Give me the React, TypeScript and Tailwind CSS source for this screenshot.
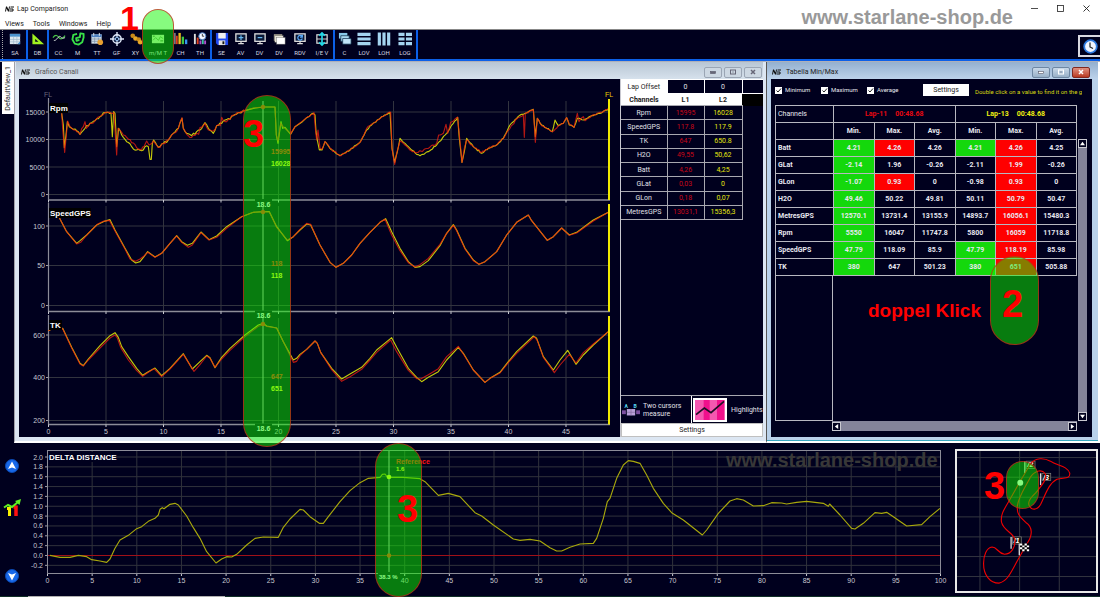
import React from "react";

type Pt = [number, number];

/* ---------- trace data (three units per chart pixel) ---------- */

const parse = (s: string, dx = 0, dy = 0): Pt[] =>
  s.trim().split(/\s+/).map((p) => {
    const [x, y] = p.split(",").map(Number);
    return [x + dx, y + dy] as Pt;
  });

const toPath = (pts: Pt[]) => "M" + pts.map((p) => p.map((v) => Math.round(v * 10) / 10).join(",")).join("L");

const noisy = (pts: Pt[], seed: number, amp: number): Pt[] => {
  let s = seed;
  const rnd = () => {
    s = (s * 9301 + 49297) % 233280;
    return s / 233280 - 0.5;
  };
  const out: Pt[] = [];
  pts.forEach((p, i) => {
    out.push(p);
    const n = pts[i + 1];
    if (!n) return;
    const steps = Math.floor((n[0] - p[0]) / 4);
    for (let k = 1; k < steps; k++) {
      const t = k / steps;
      out.push([p[0] + (n[0] - p[0]) * t, p[1] + (n[1] - p[1]) * t + rnd() * amp]);
    }
  });
  return out;
};

const rpm2 = [
  ...noisy(parse("185,85 190,120 193,188 198,150 202,110 208,125 220,133 230,137 240,148 255,130 270,115 285,107 300,95 315,83 333,84 337,155 341,80 345,85 350,185 356,130 365,150 380,170 395,185 410,195 425,197 435,185 445,185 450,223 454,223 457,175 461,165 475,187 490,175 505,165 520,145 535,130 546,100 550,130 560,145 575,152 590,140 600,135 615,113 625,130 640,145 650,122 665,115 675,105 690,103 700,92 715,83 735,77"), 7, 8),
  ...parse("760,70 790,66 825,66 829,150 834,175 843,110 848,130 855,127 872,148 885,125 905,112"),
  ...noisy(parse("20,98 40,85 45,90 48,140 52,165 58,195 66,195 75,170 90,190 120,212 150,195 180,172 200,135 215,120 245,95 270,82 276,190 284,232 292,200 300,160 315,175 330,190 350,208 360,212 385,200 410,180 440,145 460,115 473,97 478,160 486,232 493,200 500,160 520,185 545,205 565,190 590,180 610,160 630,120 650,100 665,88 685,80 700,73 706,155 712,100 725,120 740,130 757,140 765,105 775,122 790,115 800,98 808,120 822,127 832,100 850,105 875,92 900,85 925,72", 900), 11, 4),
];
const rpm1 = [
  ...noisy(parse("185,85 188,130 194,202 199,150 203,108 210,125 222,135 240,148 255,110 259,130 270,115 285,107 300,95 315,83 342,83 346,150 350,210 354,130 365,142 380,157 395,173 410,188 420,193 432,185 440,168 447,180 460,168 475,187 490,175 505,165 520,145 535,130 546,98 550,130 560,148 575,157 590,145 596,148 600,128 615,115 625,135 640,138 650,122 661,122 665,97 675,110 690,103 700,90 715,83 735,77"), 31, 9),
  ...parse("760,69 790,66 825,66 829,150 834,168 842,115 852,128 872,146 885,125 905,110"),
  ...noisy(parse("20,98 42,83 47,140 50,165 54,135 60,190 66,193 75,170 90,190 120,212 150,195 180,172 200,130 215,117 245,95 272,82 276,190 284,238 290,205 300,168 315,180 330,195 350,203 385,190 410,175 416,150 430,145 438,118 443,145 452,112 473,97 478,150 486,232 493,190 500,165 520,185 545,202 565,190 590,180 610,160 630,130 650,102 670,90 673,157 676,85 700,73 706,172 712,100 725,122 740,130 757,140 775,122 790,115 800,98 808,118 822,127 832,85 837,110 850,95 855,107 875,92 900,82 925,72", 900), 5, 6),
];

const speed2 = [
  ...parse("178,398 200,440 230,475 240,467 260,450 290,420 310,410 330,404 345,435 375,490 395,525 407,534 420,530 432,515 443,500 465,516 485,505 510,475 530,452 545,470 562,481 577,475 603,441 627,464 650,453 680,425 725,395 760,382 790,380 808,380 830,425 862,467 880,455"),
  ...parse("0,435 20,417 32,420 60,480 90,532 108,547 130,535 155,510 180,475 210,442 240,412 257,401 275,440 300,490 325,530 345,547 360,545 385,527 420,482 440,445 460,419 470,435 495,490 520,525 537,538 555,530 590,500 620,450 650,412 685,390 695,407 742,466 760,455 785,429 808,450 830,442 880,405 925,382", 900),
];
const speed1 = [
  ...parse("178,398 200,440 230,477 242,472 262,448 292,418 310,409 328,406 345,438 375,492 390,522 407,529 420,522 432,513 443,502 465,517 485,505 510,475 530,453 545,472 565,487 577,480 603,443 627,465 650,457 680,430 725,395 760,382 790,380 808,381 830,427 862,465 880,455"),
  ...parse("0,433 20,415 32,418 60,480 90,532 108,547 130,535 155,510 180,475 210,442 240,412 255,403 275,450 300,497 325,533 345,546 360,539 385,520 420,478 440,445 460,421 470,437 495,492 520,527 537,538 555,530 590,500 620,450 650,412 685,390 695,407 742,466 760,455 785,429 808,451 830,444 880,408 925,382", 900),
];

const tk2 = [
  ...parse("145,212 155,207 188,205 200,230 215,262 240,310 250,317 265,297 300,257 330,227 345,218 355,232 365,260 385,290 410,325 428,346 445,335 465,324 485,347 510,325 550,281 577,327 600,305 620,286 630,293 645,323 665,292 690,265 735,225 775,195 790,190 800,198 830,204 850,245 880,300 890,295"),
  ...parse("0,283 20,268 45,243 52,250 62,277 95,325 125,357 150,342 185,322 210,295 230,270 275,233 290,262 325,325 350,352 365,365 385,352 415,335 440,300 475,262 490,280 520,330 555,367 570,355 600,337 625,305 650,275 700,228 710,235 730,290 760,330 780,300 803,271 828,313 850,285 880,255 925,215", 900),
];
const tk1 = [
  ...parse("145,212 155,207 188,206 200,232 215,264 240,312 250,318 265,300 300,264 330,234 345,225 352,234 362,262 385,300 410,332 428,349 445,337 462,326 485,350 510,327 550,283 582,334 600,314 620,288 630,295 645,322 665,297 690,271 735,230 775,199 790,194 800,199 830,204 850,245 880,307 890,304"),
  ...parse("0,287 20,268 45,243 52,250 62,277 95,329 125,364 150,350 185,328 210,300 230,277 272,240 290,275 325,331 350,356 362,357 385,344 415,326 440,290 475,259 490,282 520,330 555,367 570,355 600,339 625,308 650,280 703,230 712,242 730,292 763,338 780,315 808,283 828,309 850,278 880,252 925,215", 900),
];

const delta = [
  ...parse("150,346 180,352 210,352 235,346 260,350 275,359 300,363 320,367 330,357 345,325 360,300 385,286 410,266 425,260 445,244 465,235 475,225 480,208 487,203 492,206 510,193 525,190 535,195 560,228 580,263 600,295 620,335 648,369 665,357 680,350 695,351 710,343 740,315 765,295 790,291 835,292 850,262 870,237 900,208 910,210 930,230 958,250"),
  ...parse("10,250 25,230 60,185 90,152 120,128 145,115 180,112 187,103 195,102 203,112 250,112 300,116 315,125 355,166 385,160 420,170 465,218 485,228 520,255 580,297 600,301 630,298 660,303 690,323 710,333 725,333 750,322 780,312 820,310 830,295 850,235 862,185 870,175 890,115 910,75 925,62", 960),
  ...parse("70,244 90,250 110,285 130,325 160,370 185,398 220,420 277,465 290,450 325,400 360,363 380,356 400,360 430,378 460,377 485,368 515,369 530,372 560,367 590,364 640,370 655,379 659,372 690,405 725,445 735,447 760,430 795,398 815,400 830,397 850,410 890,438 935,434 960,410 990,385", 1830, -180),
];

/* ---------- charts ---------- */

const axisText = "fill-[#c8c8d0] text-[7px]";

function Trace({ pts, dy, className }: { pts: Pt[]; dy: number; className: string }) {
  return (
    <path d={toPath(pts)} transform={`translate(0 ${dy}) scale(0.33333)`} fill="none" strokeWidth={3.4} strokeLinejoin="round" className={className} />
  );
}

interface Panel {
  name: string;
  labelW: number;
  top: number;
  base: number;
  ticks: [string, number][];
  dy: number;
  a: Pt[];
  b: Pt[];
  va: string;
  vb: string;
  vy: number;
  dot: number;
}

const panels: Panel[] = [
  { name: "Rpm", labelW: 19, top: 101, base: 200, ticks: [["15000", 112], ["10000", 139.5], ["5000", 167], ["0", 194.5]], dy: 85, a: rpm1, b: rpm2, va: "15995", vb: "16028", vy: 154, dot: 107 },
  { name: "SpeedGPS", labelW: 42, top: 206, base: 311.5, ticks: [["100", 226], ["50", 265.5], ["0", 305.5]], dy: 85, a: speed1, b: speed2, va: "118", vb: "118", vy: 266, dot: 212 },
  { name: "TK", labelW: 13, top: 318, base: 424.5, ticks: [["600", 335], ["400", 377.5], ["200", 420.5]], dy: 260, a: tk1, b: tk2, va: "647", vb: "651", vy: 379, dot: 324 },
];

function ChannelChart() {
  const xs = Array.from({ length: 10 }, (_, i) => 48.5 + i * 57.5);
  return (
    <svg viewBox="19 79 601 358" className="block w-full bg-[#00001e] font-['Liberation_Sans',sans-serif]" role="img" aria-label="Grafico Canali">
      <text x="44" y="97" className="fill-[#66667a] text-[7px]">FL</text>
      <text x="605" y="97" className="fill-[#e8c800] text-[7px]">FL</text>
      {panels.map((p) => (
        <g key={p.name}>
          {xs.slice(1).map((x) => (
            <path key={x} d={`M${x} ${p.top}V${p.base}`} stroke="#32343f" />
          ))}
          {p.ticks.map(([t, y]) => (
            <g key={t}>
              <path d={`M49 ${y}H609`} stroke="#32343f" />
              <path d={`M46 ${y}h3`} stroke="#a0a0a8" />
              <text x="45" y={y + 2.5} textAnchor="end" className={axisText}>{t}</text>
            </g>
          ))}
          <path d={`M48.5 ${p.top - 3}V${p.base}`} stroke="#8c8c98" strokeWidth="1.2" />
          <path d={`M48 ${p.base}H610`} stroke="#8c8c98" strokeWidth="1.4" />
          {xs.map((x) => (
            <path key={x} d={`M${x} ${p.base}v2.5`} stroke="#c8c8d0" />
          ))}
          <Trace pts={p.b} dy={p.dy} className="stroke-[#c4c80a]" />
          <Trace pts={p.a} dy={p.dy} className="stroke-[#f02010]/75" />
          <path d={`M263 ${p.top}V${p.base}`} stroke="#b8b8b8" />
          <circle cx="263" cy={p.dot} r="2.2" fill="#ff2010" />
          <rect x="255" y={p.base - 1} width="17" height="9" fill="#00001e" />
          <text x="263.5" y={p.base + 6.5} textAnchor="middle" className="fill-white text-[7px] font-bold">18.6</text>
          <text x="271" y={p.vy} className="fill-[#ff2010] text-[7px] font-bold">{p.va}</text>
          <text x="271" y={p.vy + 11.5} className="fill-[#ffff20] text-[7px] font-bold">{p.vb}</text>
          <rect x="49" y={p.top + 2} width={p.labelW} height="10" fill="#000" />
          <text x="50" y={p.top + 10} className="fill-white text-[8px] font-bold">{p.name}</text>
          <path d={`M609 ${p.top - 2}V${p.base}`} stroke="#f0e800" strokeWidth="2" />
        </g>
      ))}
      {xs.map((x, i) => (
        <text key={x} x={x} y="434" textAnchor="middle" className={axisText}>{i * 5}</text>
      ))}
    </svg>
  );
}

function DeltaChart() {
  const xs = Array.from({ length: 21 }, (_, i) => 47.5 + i * 44.65);
  const ys = Array.from({ length: 12 }, (_, i) => 457 + i * 9.85);
  return (
    <svg viewBox="24 443 926 152" className="block w-full font-['Liberation_Sans',sans-serif]" role="img" aria-label="Delta distance">
      {xs.map((x, i) => (
        <g key={x}>
          <path d={`M${x} 451V573`} stroke="#30323c" />
          <path d={`M${x} 573v3`} stroke="#c8c8d0" />
          <text x={x} y="582.5" textAnchor="middle" className={axisText}>{i * 5}</text>
        </g>
      ))}
      {ys.map((y, i) => (
        <g key={y}>
          <path d={`M48 ${y}H940`} stroke="#30323c" />
          <path d={`M45 ${y}h3`} stroke="#a0a0a8" />
          <text x="43" y={y + 2.5} textAnchor="end" className={axisText}>{(2 - i * 0.2).toFixed(1).replace("-0.0", "0.0")}</text>
        </g>
      ))}
      <rect x="47.5" y="450.5" width="893" height="123" fill="none" stroke="#8c8c98" />
      <path d="M48 555.5H940" stroke="#a01018" />
      <Trace pts={delta} dy={440} className="stroke-[#a8a80c]" />
      <rect x="49" y="452" width="64" height="10" fill="#00001e" />
      <text x="49" y="460" className="fill-white text-[8px] font-bold">DELTA DISTANCE</text>
      <path d="M389 451V573" stroke="#b8b8b8" />
      <circle cx="389" cy="477" r="2.3" fill="#ffff20" />
      <circle cx="389" cy="555.5" r="2.2" fill="#ff2010" />
      <text x="396" y="464" className="fill-[#ff1010] text-[7px] font-bold">Reference</text>
      <text x="396" y="471" className="fill-[#ffff20] text-[6px] font-bold">1.6</text>
      <rect x="378" y="572" width="22" height="8" fill="#00001e" />
      <text x="379" y="579" className="fill-white text-[6px] font-bold">38.3 %</text>
      <text x="726" y="467" className="fill-[#383838] text-[20px] font-bold">www.starlane-shop.de</text>
    </svg>
  );
}

function Flag({ x, y, n }: { x: number; y: number; n: string }) {
  return (
    <g>
      <path d={`M${x} ${y}v36`} stroke="#ddd" strokeWidth="4" />
      <rect x={x + 4} y={y} width="27" height="22" fill="#111" stroke="#888" strokeWidth="2" />
      <text x={x + 7} y={y + 19} className="fill-white text-[22px] font-bold italic">{n}</text>
    </g>
  );
}

function TrackMap() {
  return (
    <svg viewBox="1040 212 424 426" className="block w-full border-2 border-[#e8e8e8] font-['Liberation_Sans',sans-serif]" role="img" aria-label="Track map">
      {[1110, 1231, 1352].map((x) => <path key={x} d={`M${x} 212V638`} stroke="#343640" strokeWidth="3" />)}
      {[232, 292, 353, 413, 474, 534, 595].map((y) => <path key={y} d={`M1040 ${y}H1464`} stroke="#343640" strokeWidth="3" />)}
      <Flag x={1247} y={243} n="/2" />
      <Flag x={1295} y={280} n="/3" />
      <Flag x={1205} y={474} n="/1" />
      <path d="M1230 309L1200 362C1180 395 1172 410 1176 430C1182 455 1210 460 1216 480C1220 505 1205 527 1185 527C1165 525 1163 505 1147 505C1130 507 1121 530 1121 555C1121 590 1140 615 1168 615C1195 610 1205 580 1228 540L1262 480C1272 455 1265 440 1250 430C1235 415 1222 408 1224 380C1228 350 1250 320 1265 290C1280 270 1300 268 1308 280C1318 295 1300 315 1280 340C1265 355 1255 365 1260 378C1268 395 1285 392 1295 375C1310 345 1320 310 1345 298C1365 292 1385 300 1384 280C1375 255 1345 258 1325 243C1305 232 1280 232 1265 250Z" fill="none" stroke="#f00000" strokeWidth="3.4" />
      <path d="M1230 494v36" stroke="#ddd" strokeWidth="4" />
      <rect x="1232" y="494" width="28" height="24" fill="#000" />
      <path d="M1232 494h7v6h-7zM1246 494h7v6h-7zM1239 500h7v6h-7zM1253 500h7v6h-7zM1232 506h7v6h-7zM1246 506h7v6h-7zM1239 512h7v6h-7zM1253 512h7v6h-7z" fill="#fff" />
      <circle cx="1233" cy="309" r="9" fill="#fff" />
    </svg>
  );
}

/* ---------- icons ---------- */

function Logo() {
  return (
    <svg viewBox="0 0 18 12" className="h-[6px] w-[9px]" aria-hidden="true">
      <path d="M0 11L2 1H4L7 7L8 1H10L8 11H6L3 5L2 11Z" fill="#111" />
      <path d="M11 2H18M10 6H16M9 10H16M16 6V10" stroke="#111" strokeWidth="2" fill="none" />
    </svg>
  );
}

const monitor = (inner: React.ReactNode) => (
  <>
    <rect x="2" y="2" width="11" height="8" fill="#0a1838" stroke="#ddd" strokeWidth="1.4" />
    <path d="M7.5 10v2M4.500 12.500h6" stroke="#ddd" strokeWidth="1.300" />
    {inner}
  </>
);

const icons: Record<string, React.ReactNode> = {
  sa: <><rect x="2" y="2" width="11" height="11" fill="#dce8f0" /><rect x="2" y="2" width="11" height="3" fill="#4c94d0" /><path d="M2 8h11M2 10.500h11M6 5v8M9.500 5v8" stroke="#9cb8cc" strokeWidth=".7" /><path d="M10 13l3-3v3z" fill="#3c88c8" /></>,
  db: <path d="M1.500 1.500V13H14ZM4.500 7.500L8 10.500H4.500Z" fill="#a0f020" fillRule="evenodd" />,
  cc: <><path d="M1 6C4 2 6 4 7.500 6S11 8 14 4" stroke="#48c848" fill="none" strokeWidth="1.300" /><path d="M2 9C5 10 7 3 9 5S12 7 14 6" stroke="#d8e0e0" fill="none" /></>,
  m: <path d="M6.500 2L2.500 3L1.500 8L4 12.500L8 13.500L12 11L13.500 6V2L10 1.500L9.500 5.500L5.500 6.500L6 9.500L9 8.500" stroke="#38e048" fill="none" strokeWidth="2" strokeLinejoin="round" />,
  tt: <><rect x="1.500" y="2.500" width="11" height="10" fill="#d0dce8" /><path d="M1.500 4h11" stroke="#5080c0" strokeWidth="3" /><path d="M2 7.500h10M2 10h10M5 6v6M9 6v6" stroke="#7888a0" strokeWidth=".7" /><path d="M4 1v3M10 1v3" stroke="#eee" /><circle cx="11" cy="11" r="3" fill="#e8a030" /></>,
  gf: <><circle cx="7.500" cy="7.500" r="4.500" fill="#16264a" stroke="#e0e8f8" strokeWidth="1.500" /><path d="M7.500 0V5M7.500 10V15M0 7.500H5M10 7.500H15" stroke="#e0e8f8" strokeWidth="1.500" /><circle cx="7.500" cy="7.500" r="1.800" fill="none" stroke="#9cc8f8" /></>,
  xy: <><circle cx="4" cy="4" r="2.500" fill="#c88818" /><circle cx="7" cy="7" r="2.500" fill="#e8a828" /><circle cx="10.500" cy="8" r="2.500" fill="#c88818" /><circle cx="12" cy="11" r="2.500" fill="#e8a828" /></>,
  mm: <><rect x="1" y="3" width="13" height="9" fill="#d8e8c8" /><path d="M2 9L5 6L8 9L10 5L13 7" stroke="#70a860" fill="none" /><path d="M10 9.500h3M2 4.500h2" stroke="#406830" /></>,
  ch: <><path d="M1 13V1" stroke="#ddd" /><path d="M3 13V4" stroke="#e04020" strokeWidth="2" /><path d="M6 13V1" stroke="#f0c020" strokeWidth="2.500" /><path d="M9.500 13V5" stroke="#40c840" strokeWidth="2.500" /><path d="M13 13V8" stroke="#3898f0" strokeWidth="2.500" /></>,
  th: <><path d="M2 13V2" stroke="#ddd" strokeWidth="2" /><path d="M5 13V6" stroke="#e04020" strokeWidth="2" /><path d="M8 13V9M13 13V9" stroke="#b050d0" strokeWidth="2" /><path d="M10.500 13V8" stroke="#40c8a0" strokeWidth="2" /><circle cx="10" cy="4.500" r="3.800" fill="#f4f8ff" stroke="#4878c0" /><path d="M10 2v2.500h2" stroke="#333" fill="none" /></>,
  se: <><path d="M1 1H14V14H3L1 12Z" fill="#2048f0" /><rect x="3.500" y="1" width="8" height="6" fill="#f0f0f0" /><rect x="4" y="9" width="7" height="5" fill="#e0e0e0" /><rect x="8" y="10" width="2" height="3" fill="#111" /></>,
  av: monitor(<path d="M7.500 3.500v5M5 6h5" stroke="#68b8f0" strokeWidth="1.300" />),
  dv: monitor(<path d="M5 6h5" stroke="#68b8f0" strokeWidth="1.300" />),
  dv2: <><rect x="2" y="2.500" width="9" height="7" fill="#c8c0a8" /><rect x="3" y="4" width="9" height="7" fill="#e8e4d8" stroke="#555" strokeWidth=".5" /><rect x="5" y="6" width="9" height="7" fill="#fff" stroke="#777" strokeWidth=".5" /></>,
  rdv: monitor(<path d="M9.500 4.500A2.500 2.500 0 1 0 10 7M10 3v2.500H7.500" stroke="#58a8f8" strokeWidth="1.300" fill="none" />),
  iev: <><rect x="2" y="3" width="11" height="9" fill="none" stroke="#ddd" strokeWidth="1.300" /><path d="M2 7.500h11" stroke="#ddd" /><path d="M7.500 1v13M4.500 4L7.500 1L10.500 4M4.500 11L7.500 14L10.500 11" stroke="#20d8e8" strokeWidth="1.800" fill="none" /></>,
  c: <><path d="M1 1h9v6H1z" fill="#88c8e8" /><path d="M3 4h9v6H3z" fill="#a8d8f0" stroke="#10304c" strokeWidth=".8" /><path d="M5 7h9v6H5z" fill="#c0e4f8" stroke="#10304c" strokeWidth=".8" /></>,
  lov: <path d="M.5 2.500h14M.5 7.500h14M.5 12.500h14" stroke="#a4d4f0" strokeWidth="3.400" />,
  loh: <path d="M2.500 .5v14M7.500 .5v14M12.500 .5v14" stroke="#a4d4f0" strokeWidth="3.400" />,
  log: <path d="M.5 2.500h6.500M8.500 2.500h6.500M.5 7.500h6.500M8.500 7.500h6.500M.5 12.500h6.500M8.500 12.500h6.500" stroke="#a4d4f0" strokeWidth="3.400" />,
};

const tools: { icon: string; label: string; w: string; sep?: boolean }[] = [
  { icon: "sa", label: "SA", w: "w-[22px]", sep: true },
  { icon: "db", label: "DB", w: "w-[19px]", sep: true },
  { icon: "cc", label: "CC", w: "w-[19px]" },
  { icon: "m", label: "M", w: "w-[19px]" },
  { icon: "tt", label: "TT", w: "w-5" },
  { icon: "gf", label: "GF", w: "w-[19px]" },
  { icon: "xy", label: "XY", w: "w-[19px]" },
  { icon: "mm", label: "m/M T", w: "w-[26px]" },
  { icon: "ch", label: "CH", w: "w-[19px]" },
  { icon: "th", label: "TH", w: "w-5", sep: true },
  { icon: "se", label: "SE", w: "w-[19px]" },
  { icon: "av", label: "AV", w: "w-[19px]" },
  { icon: "dv", label: "DV", w: "w-[19px]" },
  { icon: "dv2", label: "DV", w: "w-5" },
  { icon: "rdv", label: "RDV", w: "w-[22px]" },
  { icon: "iev", label: "I/E V", w: "w-[22px]", sep: true },
  { icon: "c", label: "C", w: "w-[19px]" },
  { icon: "lov", label: "LOV", w: "w-5" },
  { icon: "loh", label: "LOH", w: "w-5" },
  { icon: "log", label: "LOG", w: "w-[22px]", sep: true },
];

function WindowTitle({ title, active }: { title: string; active?: boolean }) {
  const btn = active
    ? "grid h-[11px] w-[18px] place-items-center rounded-[2px] border border-[#6e87a3] bg-linear-to-b from-[#c8d8e8] to-[#98b0c8]"
    : "grid h-[11px] w-[18px] place-items-center rounded-[2px] border border-[#9aa5b4] bg-[#ccd7e2]";
  const close = active
    ? "grid h-[11px] w-[18px] place-items-center rounded-[2px] border border-[#802820] bg-linear-to-b from-[#e09080] to-[#b83820]"
    : btn;
  const ink = active ? "#fff" : "#667";
  return (
    <div className={active ? "flex h-[17px] items-center gap-[5px] bg-linear-to-b from-[#94b0cf] to-[#bcd2ea] pt-[3px] pr-2 pl-[5px]" : "flex h-[17px] items-center gap-[5px] bg-linear-to-b from-[#b8c6d4] to-[#d6e1ec] pt-[3px] pr-px pl-[5px]"}>
      <Logo />
      <h2 className={active ? "text-[7px] leading-[10px] text-[#222]" : "text-[7px] leading-[10px] text-[#555]"}>{title}</h2>
      <div className="ml-auto flex gap-[2px]">
        <button aria-label="Minimize" className={btn}><svg viewBox="0 0 10 6" className="w-[10px]"><rect x="2.500" y="2.500" width="5" height="2" fill={ink} stroke="#556" strokeWidth=".6" /></svg></button>
        <button aria-label="Maximize" className={btn}><svg viewBox="0 0 10 6" className="w-[10px]"><rect x="2.500" y="1" width="5" height="4" fill="none" stroke={ink} /><rect x="4.500" y="2.500" width="1" height="1" fill="#556" /></svg></button>
        <button aria-label="Close" className={close}><svg viewBox="0 0 10 6" className="w-[10px]"><path d="M3 1L7 5M7 1L3 5" stroke={ink} strokeWidth="1.500" /></svg></button>
      </div>
    </div>
  );
}

/* ---------- tables ---------- */

const lapRows = [
  ["Rpm", "15995", "16028"], ["SpeedGPS", "117.8", "117.9"], ["TK", "647", "650.8"], ["H2O", "49,55", "50,62"],
  ["Batt", "4,26", "4,25"], ["GLat", "0,03", "0"], ["GLon", "0,18", "0,07"], ["MetresGPS", "13031,1", "15356,3"],
];

function LapPanel() {
  return (
    <aside className="flex flex-col border-l border-[#c8c8d0] text-[7px] leading-[10px] text-[#e0e0e8]">
      <table className="h-[141px] w-full table-fixed border-collapse text-center">
        <colgroup><col className="w-[46px]" /><col className="w-[37px]" /><col className="w-[38px]" /><col /></colgroup>
        <thead>
          <tr className="h-[14px]">
            <th className="border border-l-0 border-white bg-white font-normal text-[#222]">Lap Offset</th>
            <td className="border border-white">0</td>
            <td className="border border-white">0</td>
            <td className="border border-r-0 border-white" />
          </tr>
          <tr className="h-[12px] bg-white font-bold text-[#222]">
            <th>Channels</th><th>L1</th><th>L2</th><td className="bg-black" />
          </tr>
        </thead>
        <tbody>
          {lapRows.map(([n, a, b]) => (
            <tr key={n}>
              <th className="border border-l-0 border-[#a8a8b0] font-normal">{n}</th>
              <td className="border border-[#a8a8b0] text-[#c80818]">{a}</td>
              <td className="border border-[#a8a8b0] text-[#e4e410]">{b}</td>
              <td />
            </tr>
          ))}
        </tbody>
      </table>
      <div className="mt-auto grid grid-cols-2 border-t border-[#a8a8b0]">
        <button className="flex h-[27px] items-center gap-[3px] border-r border-white pl-px text-left leading-[8px]">
          <svg viewBox="0 0 56 42" className="h-[14px] w-[18px] shrink-0" aria-hidden="true">
            <text x="8" y="16" className="fill-[#58d8f0] text-[16px] font-bold">A</text>
            <text x="36" y="16" className="fill-[#58d8f0] text-[16px] font-bold">B</text>
            <rect x="0" y="22" width="12" height="12" fill="#7c50a0" /><rect x="15" y="18" width="26" height="20" fill="#b8a0d8" /><rect x="44" y="22" width="12" height="12" fill="#7c50a0" />
            <path d="M28 18v20M15 28h26" stroke="#806898" strokeWidth="2" />
          </svg>
          <span>Two cursors<br />measure</span>
        </button>
        <button className="flex items-center gap-1 pl-px">
          <svg viewBox="0 0 102 72" className="h-[24px] w-[34px] shrink-0" aria-hidden="true">
            <rect width="102" height="72" fill="#fff" /><rect x="7" y="6" width="88" height="60" fill="#f0108c" />
            <path d="M7 6h25v60H7zM50 6h22v60H50z" fill="#f458b0" />
            <path d="M9 50L34 30L54 44L93 10" stroke="#1c1024" strokeWidth="5" fill="none" />
          </svg>
          Highlights
        </button>
      </div>
      <button className="h-[14px] border border-[#c0c0c0] bg-white text-[#222]">Settings</button>
    </aside>
  );
}

const G = "bg-[#14d80c]";
const R = "bg-[#ff0000]";
const N = "";
const minMax: [string, [string, string][]][] = [
  ["Batt", [["4.21", G], ["4.26", R], ["4.26", N], ["4.21", G], ["4.26", R], ["4.25", N]]],
  ["GLat", [["-2.14", G], ["1.96", N], ["-0.26", N], ["-2.11", N], ["1.99", R], ["-0.26", N]]],
  ["GLon", [["-1.07", G], ["0.93", R], ["0", N], ["-0.98", N], ["0.93", R], ["0", N]]],
  ["H2O", [["49.46", G], ["50.22", N], ["49.81", N], ["50.11", N], ["50.79", R], ["50.47", N]]],
  ["MetresGPS", [["12570.1", G], ["13731.4", N], ["13155.9", N], ["14893.7", N], ["16056.1", R], ["15480.3", N]]],
  ["Rpm", [["5550", G], ["16047", N], ["11747.8", N], ["5800", N], ["16059", R], ["11718.8", N]]],
  ["SpeedGPS", [["47.79", G], ["118.09", N], ["85.9", N], ["47.79", G], ["118.19", R], ["85.98", N]]],
  ["TK", [["380", G], ["647", N], ["501.23", N], ["380", G], ["651", R], ["505.88", N]]],
];

function Check({ label }: { label: string }) {
  return (
    <label className="flex items-center gap-[3px] text-[6px]">
      <span className="grid">
        <input type="checkbox" defaultChecked className="col-start-1 row-start-1 size-[7px] appearance-none bg-white" />
        <svg viewBox="0 0 7 7" className="pointer-events-none col-start-1 row-start-1 size-[7px]"><path d="M1.500 3.500L3 5L6 1.500" stroke="#222" fill="none" /></svg>
      </span>
      {label}
    </label>
  );
}

function Arrow({ d, label }: { d: string; label: string }) {
  return (
    <button aria-label={label} className="grid size-[9px] shrink-0 place-items-center border border-[#c8c8d0] bg-[#00001e]">
      <svg viewBox="0 0 6 6" className="size-[5px]"><path d={d} fill="#fff" /></svg>
    </button>
  );
}

function MinMaxPanel() {
  const line = "border border-[#b8b8c0]";
  return (
    <div className="flex flex-1 flex-col bg-[#00001e] pr-[5px] pb-[6px] pl-1 text-[7px] leading-[10px] text-[#e8e8f0]">
      <div className="flex h-[26px] items-center">
        <div className="grid w-[148px] shrink-0 grid-cols-[46px_46px_1fr] pb-[4px]">
          <Check label="Minimum" /><Check label="Maximum" /><Check label="Average" />
        </div>
        <button className="mb-[4px] h-[12px] w-[46px] shrink-0 bg-white text-[#222]">Settings</button>
        <p className="ml-[6px] overflow-hidden text-[6px] whitespace-nowrap text-[#d8d810]">Double click on a value to find it on the g</p>
      </div>
      <div className="grid flex-1 grid-cols-[minmax(0,1fr)_10px] grid-rows-[1fr_10px]">
        <div className="grid grid-cols-[58px_minmax(0,1fr)] grid-rows-[auto_1fr]">
          <table className="col-span-2 w-full table-fixed border-collapse text-center font-bold">
            <colgroup><col className="w-[58px]" /></colgroup>
            <thead>
              <tr className="h-[17px]">
                <th className={`${line} px-[2px] text-left font-normal`}>Channels</th>
                <th colSpan={3} className={`${line} text-[#e80810]`}><span className="mr-2">Lap-11</span>00:48.68</th>
                <th colSpan={3} className={`${line} text-[#f0f010]`}><span className="mr-2">Lap-13</span>00:48.68</th>
              </tr>
              <tr className="h-[17px] border-b border-white">
                <th className={line} />
                {["Min.", "Max.", "Avg.", "Min.", "Max.", "Avg."].map((h, i) => <th key={i} className={line}>{h}</th>)}
              </tr>
            </thead>
            <tbody>
              {minMax.map(([n, cells]) => (
                <tr key={n} className="h-[17px]">
                  <th className={`${line} px-[2px] text-left`}>{n}</th>
                  {cells.map(([v, c], i) => <td key={i} className={`${line} ${c}`}>{v}</td>)}
                </tr>
              ))}
            </tbody>
          </table>
          <div className="border border-t-0 border-[#b8b8c0]" />
          <div />
        </div>
        <div className="mt-[34px] ml-px flex flex-col justify-between bg-[#84849a]">
          <Arrow label="Scroll up" d="M3 1L6 5H0Z" /><Arrow label="Scroll down" d="M3 5L6 1H0Z" />
        </div>
        <div className="ml-[57px] flex items-center justify-between bg-[#84849a]">
          <Arrow label="Scroll left" d="M1 3L5 0V6Z" /><Arrow label="Scroll right" d="M5 3L1 0V6Z" />
        </div>
      </div>
    </div>
  );
}

/* ---------- annotations ---------- */

function Mark({ box }: { box: string }) {
  return <div className={`pointer-events-none absolute rounded-full border border-[#d01818]/70 bg-[#10f800]/50 ${box}`} />;
}

function Num({ n, pos }: { n: string; pos: string }) {
  return <span className={`pointer-events-none absolute font-['Liberation_Sans',sans-serif] font-bold text-[#ff0000] ${pos}`}>{n}</span>;
}

function Round({ d, label }: { d: string; label: string }) {
  return (
    <button aria-label={label}>
      <svg viewBox="0 0 14 14" className="size-[14px]"><circle cx="7" cy="7" r="6.500" fill="#1868e8" stroke="#0c48b0" /><path d={d} fill="#fff" /></svg>
    </button>
  );
}

export default function App() {
  return (
    <div className="relative flex min-h-screen w-full flex-col overflow-hidden bg-[#00001e] font-['Roboto','Noto_Sans',sans-serif]">
      <header className="flex h-[29px] justify-between bg-white text-[7px] leading-[10px] text-[#222]">
        <div>
          <h1 className="flex h-[18px] items-center gap-[3px] pl-[5px]"><Logo />Lap Comparison</h1>
          <nav className="flex h-[11px] items-center gap-[9px] pl-[5px]">
            <button>Views</button><button>Tools</button><button>Windows</button><button>Help</button>
          </nav>
        </div>
        <div className="flex items-start">
          <span className="mr-[18px] pt-[5px] font-['Liberation_Sans',sans-serif] text-[20px] leading-[24px] font-bold text-[#999]">www.starlane-shop.de</span>
          <div className="flex gap-[19px] pt-[5px] pr-[10px]">
            <button aria-label="Minimize"><svg viewBox="0 0 7 7" className="size-[7px]"><path d="M0 3.500h7" stroke="#222" strokeWidth=".8" /></svg></button>
            <button aria-label="Maximize"><svg viewBox="0 0 7 7" className="size-[7px]"><rect x=".5" y=".5" width="6" height="6" fill="none" stroke="#222" strokeWidth=".8" /></svg></button>
            <button aria-label="Close"><svg viewBox="0 0 7 7" className="size-[7px]"><path d="M.5 .5L6.500 6.500M6.500 .5L.5 6.500" stroke="#222" strokeWidth=".9" /></svg></button>
          </div>
        </div>
      </header>

      <div className="flex h-[32px] border-t border-b-2 border-t-[#888] border-b-[#0c60e8]" role="toolbar">
        <div className="ml-[2px] w-[2px] border-l border-dotted border-[#aaa]" />
        {tools.map((t, i) => (
          <React.Fragment key={i}>
            <button className={`flex flex-col items-center gap-[3px] pt-[2px] text-[6px] leading-[8px] whitespace-nowrap text-[#d4d8e0] ${t.w}`}>
              <svg viewBox="0 0 15 15" className="size-[14px]" aria-hidden="true">{icons[t.icon]}</svg>
              {t.label}
            </button>
            {t.sep && <div className="w-[2px] bg-[#0c60e8]" />}
          </React.Fragment>
        ))}
        <button aria-label="Lap times" className="mt-[5px] ml-auto grid h-[22px] w-[22px] place-items-center border-2 border-r-0 border-[#d8d8e0]">
          <svg viewBox="0 0 15 15" className="size-[15px]"><circle cx="7.500" cy="7.500" r="6.300" fill="#f0f4ff" stroke="#2c78e0" strokeWidth="1.800" /><path d="M7 3.500V8L10 9.500" stroke="#222" fill="none" strokeWidth="1.200" /></svg>
        </button>
      </div>

      <main className="grid grid-cols-[14px_minmax(0,752fr)_minmax(0,334fr)] border-t border-[#b0b0b8]">
        <div className="pl-[2px]">
          <button className="grid h-[52px] w-full place-items-center bg-white text-[7px] leading-[10px] text-[#222]">
            <span className="rotate-180 [writing-mode:vertical-rl]">DefaultView_1</span>
          </button>
        </div>
        <section className="border-b-2 border-l border-b-white border-l-[#a0a0a8] bg-[#dce6f2] pr-[3px] pb-[4px] pl-[4px]">
          <div className="-ml-[3px]"><WindowTitle title="Grafico Canali" /></div>
          <div className="grid grid-cols-[minmax(0,601fr)_minmax(0,143fr)] bg-[#00001e]"><ChannelChart /><LapPanel /></div>
        </section>
        <section className="flex flex-col border-r-2 border-b-2 border-l border-r-white border-b-white border-l-[#555] bg-[#b9d1ea]">
          <WindowTitle title="Tabella Min/Max" active />
          <div className="flex flex-1 flex-col border-b border-[#38a8c0] pr-[6px] pb-[3px] pl-[4px]"><MinMaxPanel /></div>
        </section>
      </main>

      <section className="grid flex-1 grid-cols-[24px_minmax(0,1fr)_150px]">
        <div className="flex flex-col items-center pt-[16px] pb-[13px]">
          <Round label="Previous" d="M7 2.500L11 10L7 8.500L3 10Z" />
          <svg viewBox="0 0 18 18" className="mt-[26px] mb-auto size-[18px]" aria-hidden="true">
            <path d="M6.500 17V8M4 9.500h3" stroke="#f8f000" strokeWidth="3" /><path d="M13 17V6.500M10.500 8h3" stroke="#ff1010" strokeWidth="3.500" />
            <path d="M1 8.500L5 6L9 8L15 3" stroke="#60f020" strokeWidth="2" fill="none" /><path d="M12 2L18 0L16.500 6Z" fill="#60f020" />
          </svg>
          <Round label="Next" d="M7 11.500L11 4L7 5.500L3 4Z" />
        </div>
        <DeltaChart />
        <div className="pt-[6px] pr-[2px] pl-[5px]"><TrackMap /></div>
      </section>
      <div className="h-px bg-[#123028] pl-[28px]"><div className="h-px w-[197px] bg-[#b0b0b0]" /></div>

      <Mark box="top-[9px] left-[142px] h-[55px] w-[32px]" />
      <Mark box="top-[95px] left-[243px] h-[352px] w-[48px]" />
      <Mark box="top-[256px] left-[990px] h-[89px] w-[49px]" />
      <Mark box="top-[443px] left-[375px] h-[154px] w-[47px]" />
      <Mark box="top-[461px] left-[1006px] h-[48px] w-[33px]" />
      <Num n="1" pos="top-0 left-[120px] text-[34px] leading-[36px]" />
      <Num n="3" pos="top-[114px] left-[243px] text-[38px] leading-[40px]" />
      <Num n="2" pos="top-[284px] left-[1002px] text-[38px] leading-[40px]" />
      <Num n="3" pos="top-[489px] left-[397px] text-[38px] leading-[40px]" />
      <Num n="3" pos="top-[466px] left-[984px] text-[38px] leading-[40px]" />
      <Num n="doppel Klick" pos="top-[299px] left-[868px] text-[19px] leading-[24px]" />
    </div>
  );
}
